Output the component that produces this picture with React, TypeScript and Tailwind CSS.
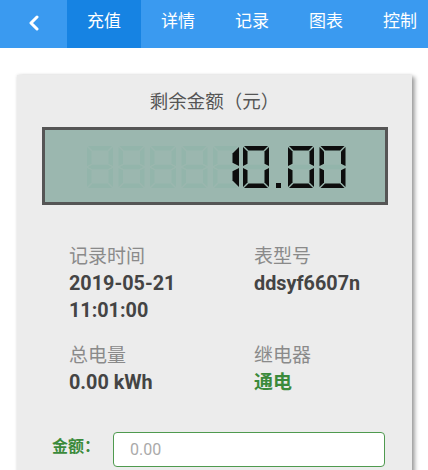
import React from "react";

const W = 26;
const H = 42;
const T = 4.5;
const G = 1;

type Seg = "a" | "b" | "c" | "d" | "e" | "f" | "g";

function segPoints(s: Seg, t: number = T): number[][] {
  const m = H / 2;
  switch (s) {
    case "a":
      return [[G, 0], [W - G, 0], [W - t - G, t], [t + G, t]];
    case "d":
      return [[G, H], [W - G, H], [W - t - G, H - t], [t + G, H - t]];
    case "b":
      return [[W, G], [W, m - G], [W - t, m - t / 2 - G], [W - t, t + G]];
    case "c":
      return [[W, H - G], [W, m + G], [W - t, m + t / 2 + G], [W - t, H - t - G]];
    case "f":
      return [[0, G], [0, m - G], [t, m - t / 2 - G], [t, t + G]];
    case "e":
      return [[0, H - G], [0, m + G], [t, m + t / 2 + G], [t, H - t - G]];
    case "g":
      return [[G, m], [t + G, m - t / 2], [W - t - G, m - t / 2], [W - G, m], [W - t - G, m + t / 2], [t + G, m + t / 2]];
  }
}

const DIGIT_SEGS: Record<string, Seg[]> = {
  "0": ["a", "b", "c", "d", "e", "f"],
  "1": ["b", "c"],
  "8": ["a", "b", "c", "d", "e", "f", "g"],
};

function Digit({ x, y, ch, fill, t }: { x: number; y: number; ch: string; fill: string; t?: number }) {
  const segs = DIGIT_SEGS[ch] || [];
  return (
    <g transform={`translate(${x} ${y})`}>
      {segs.map((s) => (
        <polygon key={s} points={segPoints(s, t).map((p) => p.join(",")).join(" ")} fill={fill} />
      ))}
    </g>
  );
}

function Lcd() {
  const cells = [42, 73.5, 105, 136.5, 168, 198, 243, 274.5];
  const real: Record<number, string> = { 4: "1", 5: "0", 6: "0", 7: "0" };
  const ghost = "#93b5ab";
  const ink = "#0d0d0d";
  return (
    <svg width="340" height="72" viewBox="0 0 340 72" className="block">
      {cells.map((cx, i) => (
        <Digit key={"g" + i} x={cx} y={16} ch="8" fill={ghost} />
      ))}
      <rect x={231} y={53} width={5} height={5} fill={ghost} />
      {cells.map((cx, i) =>
        real[i] ? <Digit key={"r" + i} x={cx} y={16} ch={real[i]} fill={ink} t={real[i] === "1" ? 6.5 : T} /> : null
      )}
      <rect x={231} y={53} width={5} height={5} fill={ink} />
    </svg>
  );
}

export default function App() {
  const font = { fontFamily: 'Roboto, "Noto Sans CJK SC", sans-serif' };
  const tabs = ["充值", "详情", "记录", "图表", "控制"];
  return (
    <div className="w-[428px] h-[470px] overflow-hidden bg-white" style={font}>
      <div className="flex h-12 bg-[#3a9af0] overflow-hidden">
        <div className="w-[67px] shrink-0 flex items-center justify-center pb-[3px]">
          <svg width="14" height="16" viewBox="0 0 14 16">
            <path d="M10 2 L4 8 L10 14" fill="none" stroke="white" strokeWidth="3" strokeLinecap="round" strokeLinejoin="round" />
          </svg>
        </div>
        {tabs.map((t, i) => (
          <div
            key={t}
            className={`w-[74px] shrink-0 flex items-center justify-center text-[17px] text-white pb-[4px] ${i === 0 ? "bg-[#1683e3]" : ""}`}
          >
            {t}
          </div>
        ))}
      </div>

      <div className="ml-[17px] mt-[27px] w-[395px] h-[420px] bg-[#ececec] shadow-[3px_2px_4px_rgba(0,0,0,0.35),0_0_3px_rgba(0,0,0,0.12)] pt-[14px]">
        <div className="h-[26px] leading-[26px] text-center text-[18.5px] text-[#555]">剩余金额（元）</div>
        <div className="mt-[12px] ml-[25px] w-[346px] h-[78px] border-[3px] border-[#555] bg-[#9bb7af]">
          <Lcd />
        </div>

        <div className="mt-[38px] ml-[52px] grid grid-cols-[185px_1fr] gap-y-[18px] text-[19px] leading-[27px]">
          <div>
            <div className="text-[#8a8a8a]">记录时间</div>
            <div className="font-bold text-[#444] text-[19.8px]">2019-05-21</div>
            <div className="font-bold text-[#444] text-[19.8px]">11:01:00</div>
          </div>
          <div>
            <div className="text-[#8a8a8a]">表型号</div>
            <div className="font-bold text-[#444] text-[19.8px]">ddsyf6607n</div>
          </div>
          <div>
            <div className="text-[#8a8a8a]">总电量</div>
            <div className="font-bold text-[#444] text-[19.8px]">0.00 kWh</div>
          </div>
          <div>
            <div className="text-[#8a8a8a]">继电器</div>
            <div className="font-bold text-[#3b8a3b]">通电</div>
          </div>
        </div>

        <div className="mt-[36px] ml-[35px] flex items-start">
          <div className="w-[61px] pt-[5px] text-[16px] leading-[20px] font-bold text-[#3b8a3b]">金额：</div>
          <div className="w-[272px] h-[35px] rounded-[4px] border border-[#4f9a4f] bg-white flex items-center pl-[16px] text-[16px] text-[#aaa]">
            0.00
          </div>
        </div>
      </div>
    </div>
  );
}
